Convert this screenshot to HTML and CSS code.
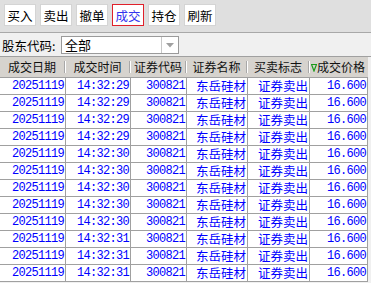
FILE: index.html
```html
<!DOCTYPE html>
<html>
<head>
<meta charset="utf-8">
<link rel="stylesheet" href="styles.css">
</head>
<body>
<div class="toolbar">
  <span class="btn">买入</span>
  <span class="btn">卖出</span>
  <span class="btn">撤单</span>
  <span class="btn active">成交</span>
  <span class="btn">持仓</span>
  <span class="btn">刷新</span>
</div>
<div class="filter">
  <span class="label">股东代码:</span>
  <div class="select">
    <span class="sel-text">全部</span>
    <span class="sel-btn"><svg width="8" height="5" viewBox="0 0 8 5"><path d="M0 0H8L4 4.5Z" fill="#a0a0a0"/></svg></span>
  </div>
</div>
<div class="grid">
  <div class="hd"><span class="ht">成交日期</span><span class="sep"></span></div>
  <div class="hd"><span class="ht">成交时间</span><span class="sep"></span></div>
  <div class="hd"><span class="ht">证券代码</span><span class="sep"></span></div>
  <div class="hd"><span class="ht">证券名称</span><span class="sep"></span></div>
  <div class="hd"><span class="ht">买卖标志</span><span class="sep"></span></div>
  <div class="hd last"><span class="ht"><svg class="tri" width="6" height="9" viewBox="0 0 6 9"><path d="M0.5 1.5H5.5L3 8Z" fill="none" stroke="#1a9a1a" stroke-width="1.2"/></svg>成交价格</span></div>

  <div class="c n">20251119</div><div class="c n">14:32:29</div><div class="c n">300821</div><div class="c z">东岳硅材</div><div class="c z">证券卖出</div><div class="c n">16.600</div>
  <div class="c n">20251119</div><div class="c n">14:32:29</div><div class="c n">300821</div><div class="c z">东岳硅材</div><div class="c z">证券卖出</div><div class="c n">16.600</div>
  <div class="c n">20251119</div><div class="c n">14:32:29</div><div class="c n">300821</div><div class="c z">东岳硅材</div><div class="c z">证券卖出</div><div class="c n">16.600</div>
  <div class="c n">20251119</div><div class="c n">14:32:29</div><div class="c n">300821</div><div class="c z">东岳硅材</div><div class="c z">证券卖出</div><div class="c n">16.600</div>
  <div class="c n">20251119</div><div class="c n">14:32:30</div><div class="c n">300821</div><div class="c z">东岳硅材</div><div class="c z">证券卖出</div><div class="c n">16.600</div>
  <div class="c n">20251119</div><div class="c n">14:32:30</div><div class="c n">300821</div><div class="c z">东岳硅材</div><div class="c z">证券卖出</div><div class="c n">16.600</div>
  <div class="c n">20251119</div><div class="c n">14:32:30</div><div class="c n">300821</div><div class="c z">东岳硅材</div><div class="c z">证券卖出</div><div class="c n">16.600</div>
  <div class="c n">20251119</div><div class="c n">14:32:30</div><div class="c n">300821</div><div class="c z">东岳硅材</div><div class="c z">证券卖出</div><div class="c n">16.600</div>
  <div class="c n">20251119</div><div class="c n">14:32:30</div><div class="c n">300821</div><div class="c z">东岳硅材</div><div class="c z">证券卖出</div><div class="c n">16.600</div>
  <div class="c n">20251119</div><div class="c n">14:32:31</div><div class="c n">300821</div><div class="c z">东岳硅材</div><div class="c z">证券卖出</div><div class="c n">16.600</div>
  <div class="c n">20251119</div><div class="c n">14:32:31</div><div class="c n">300821</div><div class="c z">东岳硅材</div><div class="c z">证券卖出</div><div class="c n">16.600</div>
  <div class="c n">20251119</div><div class="c n">14:32:31</div><div class="c n">300821</div><div class="c z">东岳硅材</div><div class="c z">证券卖出</div><div class="c n">16.600</div>
</div>
</body>
</html>
```
FILE: styles.css
```css
html, body {
  margin: 0;
  padding: 0;
}
body {
  width: 371px;
  height: 283px;
  overflow: hidden;
  background: #f0f0f0;
  font-family: "Noto Sans CJK SC", "Liberation Sans", sans-serif;
  font-size: 13px;
  color: #000;
}
.toolbar {
  height: 33px;
  box-sizing: border-box;
  background: #dfdfdf;
  border-bottom: 1px solid #a8a8a8;
  display: flex;
  gap: 4px;
  padding: 4px 0 0 4px;
}
.btn {
  width: 32px;
  height: 22px;
  box-sizing: border-box;
  background: #fff;
  border: 1px solid #d4d4d4;
  display: flex;
  align-items: center;
  justify-content: center;
  line-height: 13px;
  font-size: 12.5px;
}
.btn.active {
  border-color: #e0202a;
  color: #3333ee;
}
.filter {
  height: 24px;
  box-sizing: border-box;
  border-bottom: 1px solid #a0a0a0;
  display: flex;
  align-items: flex-start;
  padding: 3px 0 0 2px;
}
.label {
  width: 59px;
  line-height: 17px;
  padding-top: 1px;
  font-size: 12.5px;
}
.select {
  width: 118px;
  height: 18px;
  box-sizing: border-box;
  border: 1px solid #9a9a9a;
  background: #fff;
  display: flex;
}
.sel-text {
  flex: 1;
  padding-left: 3px;
  line-height: 16px;
  font-size: 13px;
}
.sel-btn {
  width: 16px;
  border-left: 1px solid #c8c8c8;
  display: flex;
  align-items: center;
  justify-content: center;
}
.grid {
  width: 368px;
  display: grid;
  grid-template-columns: 66px 65px 56px 61px 62px 58px;
  grid-template-rows: 21px;
  grid-auto-rows: 17px;
  background: #fff;
}
.hd {
  background: #d6d3ce;
  border-bottom: 1px solid #a0a0a0;
  display: flex;
  align-items: center;
  font-size: 12px;
  line-height: 14px;
  color: #111;
  white-space: nowrap;
}
.ht {
  flex: 1;
  display: flex;
  justify-content: center;
  align-items: center;
}
.hd.last .ht {
  justify-content: flex-start;
  padding-left: 1px;
}
.sep {
  width: 0;
  height: 12px;
  border-left: 1px solid #a8a8a8;
  border-right: 1px solid #fff;
}
.c {
  box-sizing: border-box;
  border-right: 1px solid #a0a0a0;
  border-bottom: 1px solid #a0a0a0;
  display: flex;
  align-items: center;
  justify-content: flex-end;
  padding-right: 1px;
  color: #0000ff;
  white-space: nowrap;
}
.n {
  font-family: "Liberation Mono", monospace;
  font-size: 12px;
  letter-spacing: -0.7px;
  line-height: 14px;
}
.z {
  font-size: 12.5px;
  line-height: 14px;
}
```
